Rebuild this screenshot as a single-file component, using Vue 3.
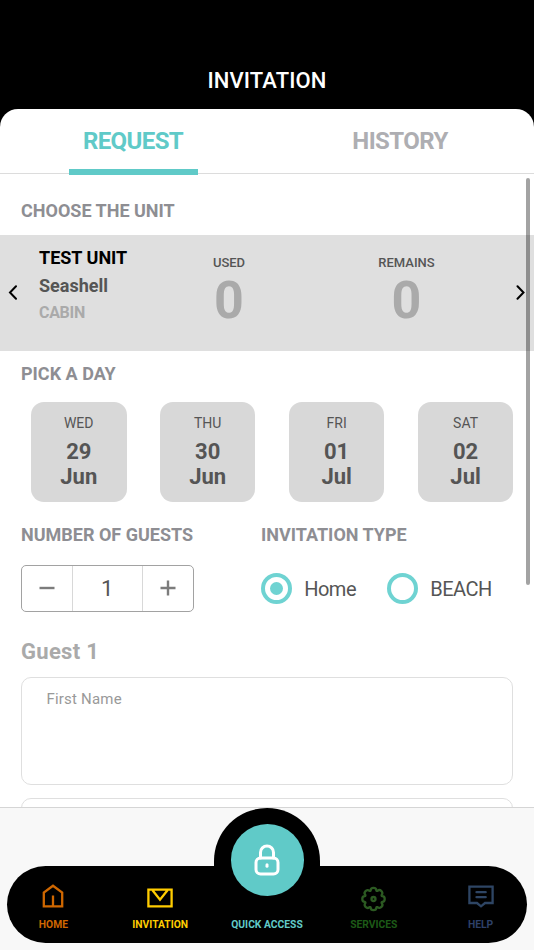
<script setup>
import { ref } from 'vue'

const days = [
  { name: 'WED', date: '29', month: 'Jun' },
  { name: 'THU', date: '30', month: 'Jun' },
  { name: 'FRI', date: '01', month: 'Jul' },
  { name: 'SAT', date: '02', month: 'Jul' },
]
const guests = ref(1)
const type = ref('home')
</script>

<template>
  <div class="screen">
    <header class="title">INVITATION</header>

    <main class="panel">
      <nav class="tabs">
        <div class="tab active"><span>REQUEST</span></div>
        <div class="tab"><span>HISTORY</span></div>
      </nav>

      <h2 class="heading unit-heading">CHOOSE THE UNIT</h2>
      <section class="unit">
        <svg class="arrow" viewBox="0 0 10 16"><path d="M9 1.3 L3 7.5 L9 13.7" /></svg>
        <div class="unit-info">
          <div class="unit-name">TEST UNIT</div>
          <div class="unit-project">Seashell</div>
          <div class="unit-kind">CABIN</div>
        </div>
        <div class="stat used">
          <div class="stat-label">USED</div>
          <div class="stat-value">0</div>
        </div>
        <div class="stat remains">
          <div class="stat-label">REMAINS</div>
          <div class="stat-value">0</div>
        </div>
        <svg class="arrow next" viewBox="0 0 10 16"><path d="M1.5 1.3 L7.5 7.5 L1.5 13.7" /></svg>
      </section>

      <h2 class="heading day-heading">PICK A DAY</h2>
      <section class="days">
        <div v-for="d in days" :key="d.date" class="day">
          <div class="day-name">{{ d.name }}</div>
          <div class="day-date">{{ d.date }}</div>
          <div class="day-date">{{ d.month }}</div>
        </div>
      </section>

      <section class="options">
        <div class="guests">
          <h2 class="heading">NUMBER OF GUESTS</h2>
          <div class="stepper">
            <button class="step" @click="guests = Math.max(1, guests - 1)">
              <svg viewBox="0 0 16 16"><path d="M0.5 8 H15.5" /></svg>
            </button>
            <div class="count">{{ guests }}</div>
            <button class="step" @click="guests++">
              <svg viewBox="0 0 16 16"><path d="M0.5 8 H15.5 M8 0.5 V15.5" /></svg>
            </button>
          </div>
        </div>
        <div class="types">
          <h2 class="heading">INVITATION TYPE</h2>
          <div class="radios">
            <div class="radio" @click="type = 'home'">
              <span class="ring"><span v-if="type === 'home'" class="dot"></span></span>
              <span class="radio-text">Home</span>
            </div>
            <div class="radio" @click="type = 'beach'">
              <span class="ring"><span v-if="type === 'beach'" class="dot"></span></span>
              <span class="radio-text">BEACH</span>
            </div>
          </div>
        </div>
      </section>

      <h3 class="guest-title">Guest 1</h3>
      <div class="field">First Name</div>
      <div class="field"></div>
    </main>

    <div class="scrollbar"></div>

    <footer class="footer">
      <div class="bump"></div>
      <div class="bar">
        <div class="item home">
          <svg width="22" height="24" viewBox="0 0 22 24"><path d="M1.8 22.3 V8.6 L11 1.8 L20.2 8.6 V22.3 Z M11 11.5 V22" /></svg>
          <span>HOME</span>
        </div>
        <div class="item invitation">
          <svg width="26" height="20" viewBox="0 0 26 20"><path d="M1.4 1.6 H24.6 V18.4 H1.4 Z M5.5 2.2 L13 11.6 L20.5 2.2" /></svg>
          <span>INVITATION</span>
        </div>
        <div class="item quick">
          <div class="lock">
            <svg width="26" height="32" viewBox="0 0 26 32">
              <rect x="2" y="14" width="22" height="16" rx="4.5" />
              <path d="M6.5 14 V8.5 A6.5 6.5 0 0 1 19.5 8.5 V14" />
              <path d="M13 20.8 V22.3" />
            </svg>
          </div>
          <span>QUICK ACCESS</span>
        </div>
        <div class="item services">
          <svg width="26" height="26" viewBox="-12.5 -13 26 26">
            <path d="M-2.8 -8.8 C-2.8 -12 2.8 -12 2.8 -8.8 Q3 -7.8 4.2 -8.2 C6.5 -10.5 10.5 -6.5 8.2 -4.2 Q7.8 -3 8.8 -2.8 C12 -2.8 12 2.8 8.8 2.8 Q7.8 3 8.2 4.2 C10.5 6.5 6.5 10.5 4.2 8.2 Q3 7.8 2.8 8.8 C2.8 12 -2.8 12 -2.8 8.8 Q-3 7.8 -4.2 8.2 C-6.5 10.5 -10.5 6.5 -8.2 4.2 Q-7.8 3 -8.8 2.8 C-12 2.8 -12 -2.8 -8.8 -2.8 Q-7.8 -3 -8.2 -4.2 C-10.5 -6.5 -6.5 -10.5 -4.2 -8.2 Q-3 -7.8 -2.8 -8.8 Z" />
            <circle r="2" />
          </svg>
          <span>SERVICES</span>
        </div>
        <div class="item help">
          <svg width="26" height="23" viewBox="0 0 26 23"><path d="M1.4 1.6 H24.6 V18 H17 L13 21.3 L9 18 H1.4 Z" /><path d="M8.5 7.2 H17.7 M8.5 12.2 H17.7" stroke-linecap="round" /></svg>
          <span>HELP</span>
        </div>
      </div>
    </footer>
  </div>
</template>

<style>
body {
  margin: 0;
  background: #000;
}
</style>

<style scoped>
.screen {
  position: relative;
  width: 534px;
  height: 950px;
  overflow: hidden;
  background: #000;
  font-family: Roboto, "Liberation Sans", sans-serif;
  display: flex;
  flex-direction: column;
}
.screen * {
  box-sizing: border-box;
}
svg {
  fill: none;
  display: block;
}
.title {
  flex: none;
  height: 109px;
  padding-top: 68px;
  line-height: 25px;
  text-align: center;
  color: #fff;
  font-size: 22px;
  letter-spacing: 0.1px;
  font-weight: 500;
}
.panel {
  flex: none;
  height: 698px;
  overflow: hidden;
  background: #fff;
  border-radius: 18px 18px 0 0;
}
.tabs {
  display: flex;
  height: 65px;
  border-bottom: 1px solid #dcdcdc;
}
.tab {
  flex: 1;
  display: flex;
  flex-direction: column;
  align-items: center;
  padding-top: 18px;
  line-height: 28px;
  font-size: 24px;
  letter-spacing: -0.6px;
  font-weight: 700;
  color: #aeaeb2;
}
.tab span {
  margin-right: 1px;
}
.tab.active {
  color: #60cac8;
}
.tab.active::after {
  content: '';
  flex: none;
  width: 129px;
  height: 5.5px;
  margin-top: 14px;
  background: #60cac8;
}
.heading {
  margin: 0;
  font-size: 18px;
  line-height: 22px;
  font-weight: 700;
  color: #8e8e93;
  white-space: nowrap;
}
.unit-heading {
  height: 61px;
  padding: 26px 21px 0;
}
.unit {
  display: flex;
  height: 115.5px;
  padding: 0 8px 0 7px;
  background: #dfdfdf;
}
.arrow {
  width: 10px;
  height: 16px;
  margin-top: 49.5px;
  stroke: #000;
  stroke-width: 2;
  stroke-linecap: round;
}
.arrow.next {
  margin-left: auto;
}
.unit-info {
  width: 120px;
  margin-left: 22px;
  padding-top: 9px;
}
.unit-name {
  font-size: 18px;
  line-height: 27px;
  font-weight: 700;
  color: #000;
}
.unit-project {
  margin-top: 1px;
  font-size: 18px;
  line-height: 28px;
  font-weight: 700;
  color: #555;
}
.unit-kind {
  font-size: 16px;
  line-height: 26px;
  letter-spacing: -0.3px;
  font-weight: 700;
  color: #aaa;
}
.stat {
  width: 100px;
  padding-top: 19.5px;
  text-align: center;
}
.used {
  margin-left: 20px;
}
.remains {
  margin-left: 77.5px;
}
.stat-label {
  font-size: 13px;
  line-height: 16px;
  font-weight: 500;
  color: #555;
}
.stat-value {
  font-size: 52px;
  line-height: 60px;
  font-weight: 700;
  color: #aaa;
}
.day-heading {
  height: 51.5px;
  padding: 12.7px 21px 0;
}
.days {
  display: flex;
  justify-content: space-between;
  padding: 0 20.7px 0 31px;
}
.day {
  width: 95.5px;
  height: 99.5px;
  padding-top: 11px;
  border-radius: 13px;
  background: #d8d8d8;
  text-align: center;
  color: #555;
}
.day-name {
  font-size: 14px;
  line-height: 20px;
  margin-bottom: 5.7px;
}
.day-date {
  font-size: 22px;
  line-height: 25.5px;
  font-weight: 700;
}
.options {
  display: grid;
  grid-template-columns: 240px 1fr;
  padding: 22.7px 0 0 21px;
  height: 136.5px;
}
.stepper {
  display: flex;
  width: 172.5px;
  height: 46.5px;
  margin-top: 19px;
  border: 1px solid #a2a2a2;
  border-radius: 5px;
}
.step {
  width: 50px;
  padding: 0;
  border: 0;
  background: none;
  display: flex;
  align-items: center;
  justify-content: center;
}
.step svg {
  width: 16px;
  height: 16px;
  stroke: #7c7c7c;
  stroke-width: 2.4;
}
.count {
  flex: 1;
  border: solid #d8d8d8;
  border-width: 0 1px;
  text-align: center;
  font-size: 22px;
  line-height: 45px;
  color: #555;
}
.radios {
  display: flex;
  margin-top: 26.5px;
}
.radio {
  display: flex;
  align-items: center;
  width: 126px;
}
.ring {
  flex: none;
  width: 31px;
  height: 31px;
  border: 4px solid #6fd3d2;
  border-radius: 50%;
  display: flex;
  align-items: center;
  justify-content: center;
}
.dot {
  width: 13px;
  height: 13px;
  border-radius: 50%;
  background: #6fd3d2;
}
.radio-text {
  margin-left: 12.2px;
  font-size: 20px;
  line-height: 24px;
  letter-spacing: -0.5px;
  padding-top: 1px;
  color: #555;
}
.guest-title {
  margin: 0 21px 12.8px;
  font-size: 22px;
  line-height: 27px;
  height: 26px;
  letter-spacing: 0.3px;
  font-weight: 700;
  color: #aaa;
}
.field {
  height: 108px;
  margin: 0 21px 13px;
  padding: 11px 24.5px;
  border: 1px solid #dfdfdf;
  border-radius: 10px;
  font-size: 15px;
  line-height: 20px;
  letter-spacing: 0.2px;
  color: #999;
}
.scrollbar {
  position: absolute;
  left: 526px;
  top: 178px;
  width: 4px;
  height: 407px;
  border-radius: 2px;
  background: rgba(0, 0, 0, 0.36);
}
.footer {
  position: relative;
  flex: none;
  height: 143px;
  padding: 58px 7px 0;
  background: #f8f8f8;
  border-top: 1px solid #d5d5d5;
}
.bump {
  position: absolute;
  left: 214px;
  top: 0;
  width: 106px;
  height: 70px;
  border-radius: 53px 53px 0 0;
  background: #000;
}
.bar {
  position: relative;
  display: flex;
  justify-content: center;
  width: 520px;
  height: 77px;
  border-radius: 38.5px;
  background: #000;
}
.item {
  flex: none;
  width: 106.8px;
  display: flex;
  flex-direction: column;
  align-items: center;
  justify-content: flex-end;
  padding-bottom: 12.4px;
  font-size: 10.3px;
  line-height: 12px;
  font-weight: 700;
  white-space: nowrap;
}
.item > svg {
  stroke: currentColor;
  stroke-width: 2.3;
}
.home { color: #cf6700; }
.home > svg { margin-bottom: 10.6px; }
.invitation { color: #ffcc00; }
.invitation > svg { margin-bottom: 10.6px; }
.quick { color: #60cac8; }
.services { color: #1d5a17; }
.services > svg { margin-bottom: 6.6px; stroke: #2c5a22; }
.help { color: #2e4068; }
.help > svg { margin-bottom: 10.6px; stroke: #2e4564; }
.lock {
  flex: none;
  width: 73px;
  height: 71.5px;
  margin-bottom: 23px;
  border-radius: 50%;
  background: #60cac8;
  display: flex;
  align-items: center;
  justify-content: center;
}
.lock svg {
  stroke: #fff;
  stroke-width: 3;
  stroke-linecap: round;
}
</style>
